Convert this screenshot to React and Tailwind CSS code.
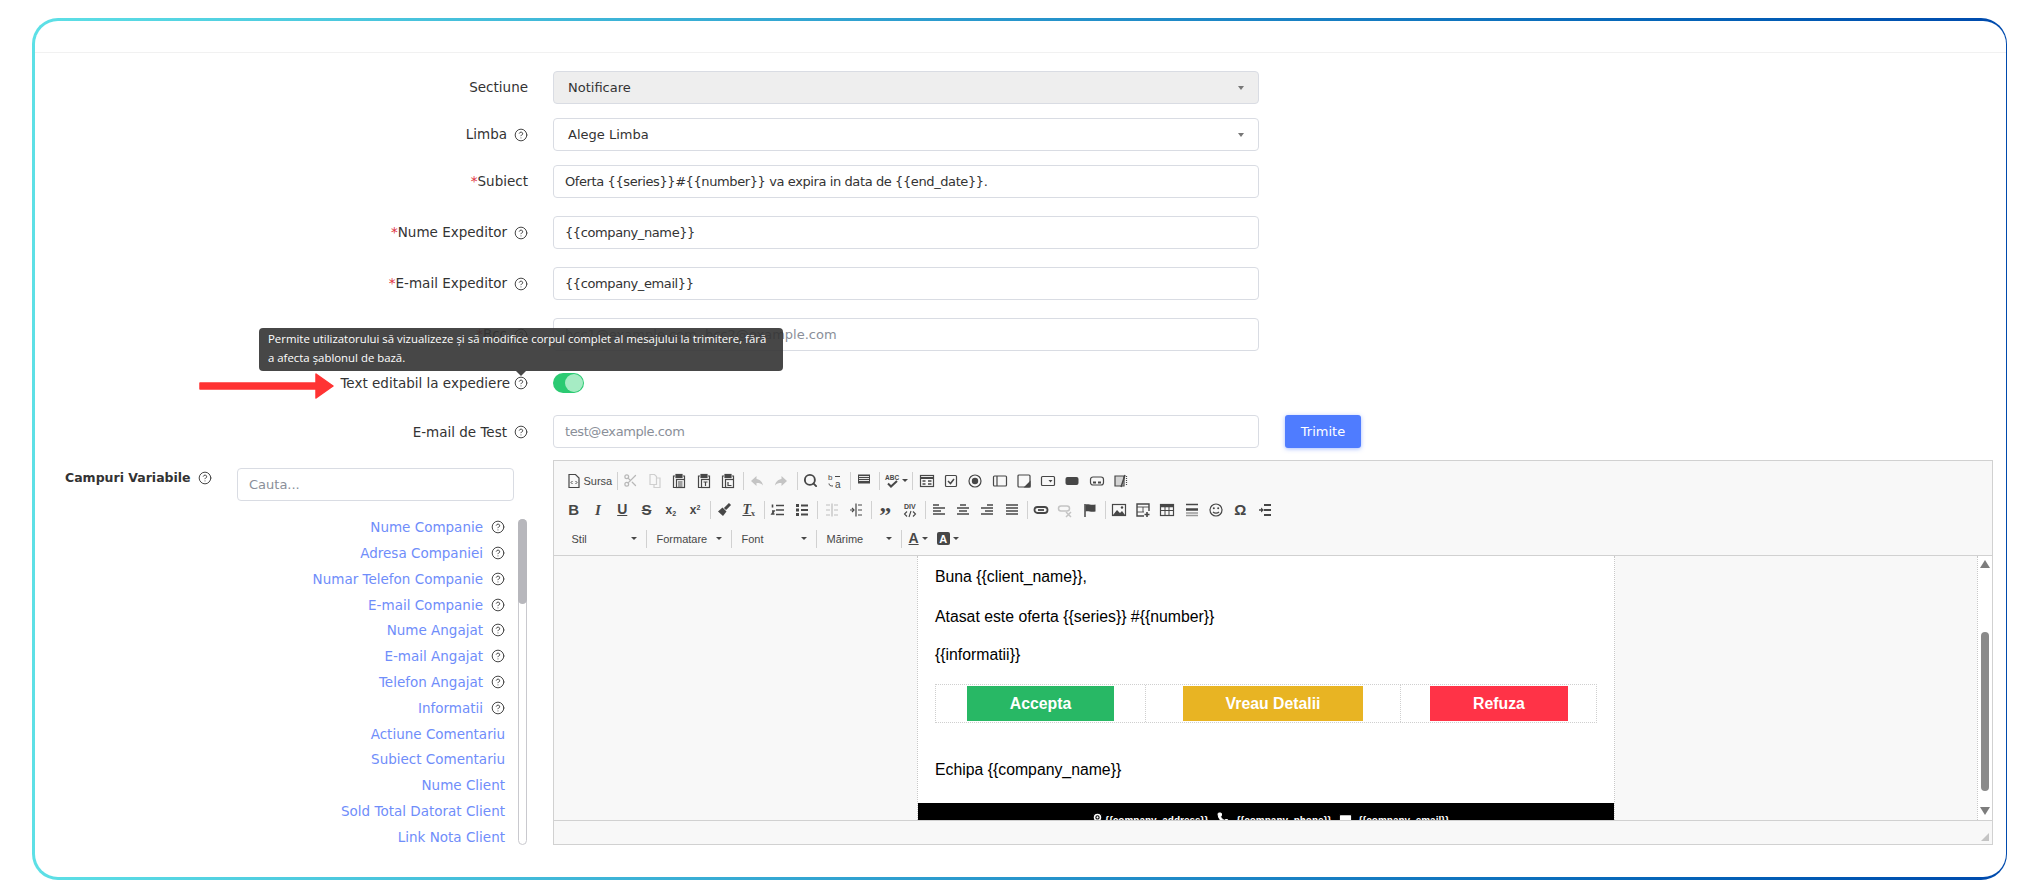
import { CircleHelp, Scissors, Search, MapPin, Phone, Mail } from "lucide-react";

const Svg = ({ children, className = "text-[#474747]" }) => (
  <svg viewBox="0 0 16 16" width="16" height="16" fill="none" stroke="currentColor" strokeWidth="1.2" className={className}>
    {children}
  </svg>
);

const Help = () => <CircleHelp size={14} strokeWidth={1.7} className="shrink-0 text-[#444]" />;

const Paste = ({ mark }) => (
  <Svg>
    <path d="M4 3H2.5v11.5H5" />
    <path d="M12 3h1.5v3" />
    <rect x="5" y="1.5" width="6" height="3" fill="currentColor" />
    <rect x="5.5" y="6.5" width="8" height="8" />
    {mark}
  </Svg>
);

const Lines = ({ d }) => (
  <Svg>
    <path d={d} strokeWidth="1.6" />
  </Svg>
);

const Glyph = ({ children, className = "" }) => (
  <span className={`font-['Liberation_Sans',sans-serif] text-[#474747] ${className}`}>{children}</span>
);

const Btn = ({ children }) => <div className="w-[24.3px] h-full flex items-center justify-center shrink-0">{children}</div>;
const Sep = () => <div className="w-px h-[18px] bg-[#d1d1d1] ml-[3px] mr-px shrink-0" />;
const Caret = () => <div className="w-0 h-0 border-x-[3px] border-x-transparent border-t-[3px] border-t-[#474747] shrink-0" />;

function Combo({ label, width = "w-[84px]" }) {
  return (
    <div className={`${width} h-full flex items-center justify-between pl-[10px] pr-[9px] shrink-0`}>
      <Glyph className="text-[11px]">{label}</Glyph>
      <Caret />
    </div>
  );
}

function Toolbar() {
  return (
    <div className="h-[95px] shrink-0 bg-[#f8f8f8] border-b border-[#d1d1d1] pl-[7.5px] pt-[5px]">
      {/* row 1 */}
      <div className="h-[29px] flex items-center">
        <div className="h-full flex items-center pl-[4px] gap-[2px] w-[52px]">
          <Svg>
            <path d="M3 1.5h6.5l3.5 3.5v9.5H3z" />
            <path d="M6.5 8 5 9.5 6.500 11M9.500 8 11 9.500 9.500 11" strokeWidth="1" />
          </Svg>
          <Glyph className="text-[11px]">Sursa</Glyph>
        </div>
        <Sep />
        <Btn><Scissors size={15} className="text-[#b8b8b8]" /></Btn>
        <Btn>
          <Svg className="text-[#cfcfcf]"><path d="M3 1.500h4.500l2 2v8H3zM9.500 5H13v9.500H7V11.500" /></Svg>
        </Btn>
        <Btn><Paste mark={<path d="M7 9h4.500M7 11h4.500M7 13h4.500" strokeWidth="1" />} /></Btn>
        <Btn><Paste mark={<path d="M7.500 9h4M9.500 9v4" strokeWidth="1.200" />} /></Btn>
        <Btn><Paste mark={<path d="M8 9v3.500h3.500" strokeWidth="1.200" />} /></Btn>
        <Sep />
        <Btn><Svg className="text-[#c4c4c4]"><path d="M7.500 3 2 8l5.500 5V10c3 0 5 .5 6.500 2.500-.5-3.500-3-6-6.500-6.500z" fill="currentColor" stroke="none" /></Svg></Btn>
        <Btn><Svg className="text-[#c4c4c4]"><path d="M8.500 3 14 8l-5.500 5V10c-3 0-5 .5-6.500 2.500.5-3.500 3-6 6.500-6.500z" fill="currentColor" stroke="none" /></Svg></Btn>
        <Sep />
        <Btn><Search size={15} strokeWidth={3} className="text-[#474747]" /></Btn>
        <Btn>
          <Svg>
            <text x="1" y="7" fontSize="8" fill="currentColor" stroke="none" fontFamily="Liberation Sans">b</text>
            <text x="8" y="15" fontSize="10" fill="currentColor" stroke="none" fontFamily="Liberation Sans">a</text>
            <path d="M8 3.500h5M2 10.500c0 2 1.500 2.500 4 2.500" strokeWidth="1" />
          </Svg>
        </Btn>
        <Sep />
        <Btn>
          <Svg>
            <rect x="2" y="1.500" width="12" height="9" fill="currentColor" stroke="none" />
            <path d="M3 3.500h10M3 5.500h10M3 7.500h10M3 12h10M6.500 14.500h3" stroke="#f8f8f8" strokeWidth="0.9" />
          </Svg>
        </Btn>
        <Sep />
        <div className="w-[26px] h-full flex items-center justify-center gap-[2px] shrink-0 ml-[2px]">
          <Svg>
            <text x="1" y="7" fontSize="6.500" fontWeight="700" fill="currentColor" stroke="none" fontFamily="Liberation Sans">ABC</text>
            <path d="M4 10.500 7 13.500 13 8" strokeWidth="2" />
          </Svg>
          <Caret />
        </div>
        <Sep />
        <Btn>
          <Svg>
            <rect x="1.500" y="2.500" width="13" height="11" />
            <path d="M2 5h12" strokeWidth="2" />
            <path d="M3.500 8h3M3.500 11h3M9 8h3.500M9 11h3.500" strokeWidth="1.500" />
          </Svg>
        </Btn>
        <Btn><Svg><rect x="2.500" y="2.500" width="11" height="11" rx="1" /><path d="M5 8l2.500 2.500L11 6" strokeWidth="1.500" /></Svg></Btn>
        <Btn><Svg><circle cx="8" cy="8" r="6" /><circle cx="8" cy="8" r="3.200" fill="currentColor" stroke="none" /></Svg></Btn>
        <Btn><Svg><rect x="1.500" y="3" width="13" height="10" rx="1" /><path d="M5 3v10" /></Svg></Btn>
        <Btn><Svg><rect x="2" y="2" width="12" height="12" rx="1" /><path d="M14 9l-5 5h5z" fill="currentColor" /></Svg></Btn>
        <Btn><Svg><rect x="1.500" y="3.500" width="13" height="9" rx="1" /><path d="M8.500 7h4L10.500 9.500z" fill="currentColor" stroke="none" /></Svg></Btn>
        <Btn><Svg><rect x="1.500" y="4" width="13" height="8" rx="2" fill="currentColor" stroke="none" /></Svg></Btn>
        <Btn><Svg><rect x="1.500" y="4" width="13" height="8" rx="2.500" /><path d="M4 9.500h3M9 9.500h3" strokeWidth="2" /></Svg></Btn>
        <Btn><Svg><path d="M2 3h9v10H2z" fill="currentColor" fillOpacity="0.2" /><path d="M12 2 8 14" strokeWidth="1.500" /><path d="M13.500 3v10" strokeDasharray="1 1" /></Svg></Btn>
      </div>
      {/* row 2 */}
      <div className="h-[29px] flex items-center">
        <Btn><Glyph className="text-[15px] font-bold">B</Glyph></Btn>
        <Btn><Glyph className="text-[15px] font-bold italic font-['Liberation_Serif',serif]">I</Glyph></Btn>
        <Btn><Glyph className="text-[14px] font-bold underline">U</Glyph></Btn>
        <Btn><Glyph className="text-[15px] font-bold line-through">S</Glyph></Btn>
        <Btn><Glyph className="text-[12px] font-bold">x<sub className="text-[7px]">2</sub></Glyph></Btn>
        <Btn><Glyph className="text-[12px] font-bold">x<sup className="text-[7px]">2</sup></Glyph></Btn>
        <Sep />
        <Btn>
          <Svg>
            <path d="M9 7 14 2" strokeWidth="3" />
            <path d="M6.500 5.500 10.500 9.500 7 14 2 9.500z" fill="currentColor" stroke="none" />
          </Svg>
        </Btn>
        <Btn><Glyph className="text-[14px] font-bold italic font-['Liberation_Serif',serif] underline">T<sub className="text-[8px] not-italic">x</sub></Glyph></Btn>
        <Sep />
        <Btn><Lines d="M6 3.500h8M6 8h8M6 12.500h8M2.500 2.500v3M2 9h2L2 12h2.500" /></Btn>
        <Btn><Svg><path d="M7 3.500h7M7 8h7M7 12.500h7" strokeWidth="1.800" /><path d="M2 3.500h3M2 8h3M2 12.500h3" strokeWidth="2.800" /></Svg></Btn>
        <Sep />
        <Btn><Svg className="text-[#bdbdbd]"><path d="M2 3h4M2 8h4M2 13h4M10 3h4M10 8h4M10 13h4M8 1.500v13M5 8H2" /></Svg></Btn>
        <Btn><Svg><path d="M2 8h4M10 3h4M10 8h4M10 13h4M8 1.500v13" /><path d="M4 6l2 2-2 2" /></Svg></Btn>
        <Sep />
        <Btn><Glyph className="text-[24px] font-bold font-['Liberation_Serif',serif] leading-none h-[12px] mt-[-2px]">”</Glyph></Btn>
        <Btn>
          <Svg>
            <text x="2" y="7" fontSize="7" fontWeight="700" fill="currentColor" stroke="none" fontFamily="Liberation Sans">DIV</text>
            <path d="M5 9.500 2.500 12 5 14.500M11 9.500l2.500 2.500L11 14.500M9 9l-2 6" strokeWidth="1.100" />
          </Svg>
        </Btn>
        <Sep />
        <Btn><Lines d="M2 3h6M2 6h12M2 9h8M2 12h12" /></Btn>
        <Btn><Lines d="M5 3h6M2 6h12M4 9h8M2 12h12" /></Btn>
        <Btn><Lines d="M8 3h6M2 6h12M6 9h8M2 12h12" /></Btn>
        <Btn><Lines d="M2 3h12M2 6h12M2 9h12M2 12h12" /></Btn>
        <Sep />
        <Btn><Svg><rect x="1.500" y="5" width="13" height="6" rx="3" strokeWidth="1.800" /><path d="M5 8h6" strokeWidth="1.800" /></Svg></Btn>
        <Btn><Svg className="text-[#c4c4c4]"><rect x="1.500" y="4" width="11" height="5" rx="2.500" strokeWidth="1.500" /><path d="M9 10l5 5M14 10l-5 5" strokeWidth="1.500" /></Svg></Btn>
        <Btn><Svg><path d="M3 2v13" strokeWidth="1.500" /><path d="M3.500 2.500c3-1 5 1 10 0v7c-5 1-7-1-10 0z" fill="currentColor" stroke="none" /></Svg></Btn>
        <Sep />
        <Btn><Svg><rect x="1.500" y="2.500" width="13" height="11" /><path d="M2 13l4-5 3 3 2-2 3 4z" fill="currentColor" stroke="none" /><circle cx="11" cy="5.500" r="1.200" fill="currentColor" stroke="none" /></Svg></Btn>
        <Btn><Svg><path d="M9 14H2V2h12v7" strokeWidth="1.400" /><path d="M2 5h12M8 5v5M2 10h7" strokeWidth="0.900" /><path d="M12 10v5M9.500 12.500h5" strokeWidth="1.600" /></Svg></Btn>
        <Btn><Svg><rect x="1.500" y="2.500" width="13" height="11" /><path d="M2 4h12" strokeWidth="2.500" /><path d="M2 8.500h12M6 5v9M10 5v9" strokeWidth="1" /></Svg></Btn>
        <Btn><Svg><path d="M2 2.500h12" strokeWidth="1.500" /><path d="M2 7.500h12" strokeWidth="2.500" /><path d="M2 11h12M2 13.500h12" className="text-[#999]" strokeWidth="1.300" /></Svg></Btn>
        <Btn><Svg><circle cx="8" cy="8" r="6" /><path d="M5 10c1.500 1.500 4.500 1.500 6 0" /><circle cx="5.800" cy="6.200" r="1" fill="currentColor" stroke="none" /><circle cx="10.200" cy="6.200" r="1" fill="currentColor" stroke="none" /></Svg></Btn>
        <Btn><Glyph className="text-[15px] font-bold">Ω</Glyph></Btn>
        <Btn><Svg><path d="M7 3h7M7 13h7M7 8h7" strokeWidth="2" /><path d="M2 8h2" strokeWidth="1.500" /><path d="M4 5.500 7 8l-3 2.500z" fill="currentColor" stroke="none" /></Svg></Btn>
      </div>
      {/* row 3 */}
      <div className="h-[29px] flex items-center">
        <Combo label="Stil" />
        <div className="w-px h-[18px] bg-[#d1d1d1] shrink-0" />
        <Combo label="Formatare" />
        <div className="w-px h-[18px] bg-[#d1d1d1] shrink-0" />
        <Combo label="Font" />
        <div className="w-px h-[18px] bg-[#d1d1d1] shrink-0" />
        <Combo label="Mărime" />
        <div className="w-px h-[18px] bg-[#d1d1d1] shrink-0" />
        <div className="h-full flex items-center pl-[7px] gap-[3px] shrink-0">
          <Glyph className="text-[14px] font-bold underline">A</Glyph>
          <Caret />
        </div>
        <div className="h-full flex items-center pl-[9px] gap-[3px] shrink-0">
          <Glyph className="w-[13px] h-[13px] bg-[#474747] !text-white text-[11px] font-bold flex items-center justify-center rounded-[2px]">A</Glyph>
          <Caret />
        </div>
      </div>
    </div>
  );
}

function EmailBody() {
  return (
    <div className="flex-1 min-w-0 overflow-hidden bg-[#f8f8f8]">
      <div className="ml-[363px] w-[698px] h-[400px] bg-white border-x border-dotted border-[#c8c8c8] font-['Liberation_Sans',sans-serif] text-[15.8px] leading-[20px] text-black">
        <div className="pl-[17px] pt-[11px]">
          <p className="mb-[20px]">Buna {"{{client_name}}"},</p>
          <p className="mb-[18px]">Atasat este oferta {"{{series}}"} #{"{{number}}"}</p>
          <p className="mb-[19px]">{"{{informatii}}"}</p>
          <div className="w-[662px] h-[39px] flex border border-dotted border-[#cfcfcf] font-bold text-white">
            <div className="w-[210px] h-full border-r border-dotted border-[#cfcfcf] pl-[31px] pt-px">
              <div className="w-[147px] h-[35px] bg-[#28b865] flex items-center justify-center">Accepta</div>
            </div>
            <div className="w-[255px] h-full border-r border-dotted border-[#cfcfcf] pl-[37px] pt-px">
              <div className="w-[180px] h-[35px] bg-[#e8b423] flex items-center justify-center">Vreau Detalii</div>
            </div>
            <div className="flex-1 h-full pl-[29px] pt-px">
              <div className="w-[138px] h-[35px] bg-[#ff3347] flex items-center justify-center">Refuza</div>
            </div>
          </div>
          <p className="mt-[37px] mb-[23px]">Echipa {"{{company_name}}"}</p>
        </div>
        <div className="h-[60px] bg-black text-white text-[10px] font-bold flex items-start pl-[173px] pt-[9px] leading-[18px]">
          <MapPin size={13} fill="white" stroke="black" className="shrink-0 mr-[1px]" />
          <span className="mr-[9px]">{"{{company_address}}"}</span>
          <Phone size={12} fill="white" className="shrink-0 mr-[7px]" />
          <span className="mr-[7px]">{"{{company_phone}}"}</span>
          <Mail size={15} fill="white" stroke="black" className="shrink-0 mr-[5px]" />
          <span>{"{{company_email}}"}</span>
        </div>
      </div>
    </div>
  );
}

function Editor() {
  return (
    <div className="w-[1440px] h-[385px] flex flex-col border border-[#d1d1d1]">
      <Toolbar />
      <div className="flex-1 min-h-0 flex">
        <EmailBody />
        <div className="w-[15px] shrink-0 bg-white border-l border-dotted border-[#c8c8c8] flex flex-col items-center pt-[4px]">
          <div className="w-0 h-0 border-x-[5px] border-x-transparent border-b-[8px] border-b-[#7d7d7d]" />
          <div className="w-[8px] h-[159px] mt-[64px] rounded-full bg-[#8a8a8a]" />
          <div className="w-0 h-0 mt-[16px] border-x-[5px] border-x-transparent border-t-[8px] border-t-[#7d7d7d]" />
        </div>
      </div>
      <div className="h-[24px] shrink-0 bg-[#f8f8f8] border-t border-[#d1d1d1] flex justify-end items-end pr-[3px] pb-[3px]">
        <div className="w-0 h-0 border-l-[8px] border-l-transparent border-b-[8px] border-b-[#c4c4c4]" />
      </div>
    </div>
  );
}

const inputCls =
  "w-[706px] h-[33px] px-[11px] rounded-[4px] border border-[#d9dce3] bg-white text-[13px] tracking-[-0.4px] text-[#333] outline-none placeholder:text-[#8a8f99]";

function Row({ label, star, help = true, gap = "ml-[7px]", mb, children }) {
  return (
    <div className={`flex items-center ${mb}`}>
      <div className="w-[493px] flex items-center justify-end text-[13.5px] text-[#333] shrink-0">
        {star && <span className="text-[#e0343f]">*</span>}
        <span>{label}</span>
        {help && <span className={gap}><Help /></span>}
      </div>
      <div className="ml-[25px] flex items-center">{children}</div>
    </div>
  );
}

function Select({ label, className }) {
  return (
    <div className={`w-[706px] h-[33px] pl-[14px] pr-[14px] rounded-[4px] border border-[#d9dce3] flex items-center justify-between text-[13px] text-[#333] ${className}`}>
      <span>{label}</span>
      <div className="w-0 h-0 border-x-[3px] border-x-transparent border-t-[4px] border-t-[#777]" />
    </div>
  );
}

const fields = [
  ["Nume Companie", true],
  ["Adresa Companiei", true],
  ["Numar Telefon Companie", true],
  ["E-mail Companie", true],
  ["Nume Angajat", true],
  ["E-mail Angajat", true],
  ["Telefon Angajat", true],
  ["Informatii", true],
  ["Actiune Comentariu", false],
  ["Subiect Comentariu", false],
  ["Nume Client", false],
  ["Sold Total Datorat Client", false],
  ["Link Nota Client", false],
];

export default function App() {
  return (
    <div className="relative w-[2025px] h-[894px] overflow-hidden bg-white pl-[32px] pt-[18px] font-['DejaVu_Sans',sans-serif]">
      <div className="w-[1975px] h-[862px] rounded-[26px] bg-linear-to-r from-[#5de0e6] to-[#004aad] pl-[3px] pr-[1.5px] py-[3px]">
        <div className="w-full h-full rounded-[23px] bg-white overflow-hidden">
          <div className="h-[32px] border-b border-[#f1f1f1]" />

          <div className="pt-[18px]">
            <Row label="Sectiune" help={false} mb="mb-[14px]">
              <Select label="Notificare" className="bg-[#eeeeee]" />
            </Row>
            <Row label="Limba" mb="mb-[14px]">
              <Select label="Alege Limba" className="bg-white" />
            </Row>
            <Row label="Subiect" star help={false} mb="mb-[18px]">
              <input readOnly className={inputCls} defaultValue="Oferta {{series}}#{{number}} va expira in data de {{end_date}}." />
            </Row>
            <Row label="Nume Expeditor" star mb="mb-[18px]">
              <input readOnly className={inputCls} defaultValue="{{company_name}}" />
            </Row>
            <Row label="E-mail Expeditor" star mb="mb-[18px]">
              <input readOnly className={inputCls} defaultValue="{{company_email}}" />
            </Row>
            <Row label="Bcc" star mb="mb-[22px]">
              <input readOnly className={`${inputCls} placeholder:tracking-normal`} placeholder="bcc1@example.com, bcc2@example.com" />
            </Row>
            <Row label="Text editabil la expediere" gap="ml-[4px]" mb="mb-[22px]">
              <div className="w-[31px] h-[20px] rounded-full bg-[#2bca72] flex items-center justify-end pr-[1px]">
                <div className="w-[18px] h-[18px] rounded-full bg-[#a6ecc4]" />
              </div>
            </Row>
            <Row label="E-mail de Test" mb="mb-[12px]">
              <input readOnly className={inputCls} placeholder="test@example.com" />
              <button className="ml-[26px] w-[76px] h-[33px] rounded-[3px] bg-[#4f7cff] text-white text-[13px] shadow-[0_1px_4px_rgba(79,124,255,0.5)]">
                Trimite
              </button>
            </Row>
          </div>

          <div className="flex">
            {/* campuri variabile */}
            <div className="w-[518px] shrink-0">
              <div className="flex pt-[8px]">
                <div className="w-[202px] pl-[30px] pt-[2px] flex items-start gap-[7px] shrink-0">
                  <span className="text-[12.5px] font-bold text-[#333] leading-[16px]">Campuri Variabile</span>
                  <span className="pt-[1px]"><Help /></span>
                </div>
                <input readOnly placeholder="Cauta..." className="w-[277px] h-[33px] px-[11px] rounded-[4px] border border-[#d9dce3] text-[13px] outline-none placeholder:text-[#8a8f99]" />
              </div>
              <div className="flex justify-end pr-[26px] mt-[18px] h-[326px]">
                <div className="flex flex-col gap-[9.8px] items-end pr-[13px] overflow-hidden">
                  {fields.map(([name, help]) => (
                    <div key={name} className="h-[16px] flex items-center gap-[8px] text-[13.5px] leading-[16px] text-[#6f8dfa] whitespace-nowrap">
                      <span>{name}</span>
                      {help && <Help />}
                    </div>
                  ))}
                </div>
                <div className="w-[9px] h-full rounded-full border border-[#c9c9ce] shrink-0">
                  <div className="w-[9px] h-[85px] rounded-full bg-[#b7b7bc] -ml-px -mt-px" />
                </div>
              </div>
            </div>
            <Editor />
          </div>
        </div>
      </div>

      {/* arrow pointing at the toggle label */}
      <svg className="absolute left-[198px] top-[370px]" width="140" height="32" viewBox="0 0 140 32">
        <path d="M2 13h116V4l17 12-17 12v-9H2z" fill="#ff3333" stroke="#ff3333" strokeWidth="1.500" strokeLinejoin="round" />
      </svg>

      {/* tooltip */}
      <div className="absolute left-[259px] top-[328px] w-[524px] h-[43px] rounded-[4px] bg-[#333333]/90 pl-[9px] pr-[12px] pt-[1px] font-['Open_Sans',sans-serif] text-[11.4px] font-medium leading-[19px] text-white">
        Permite utilizatorului să vizualizeze și să modifice corpul complet al mesajului la trimitere, fără a afecta șablonul de bază.
        <div className="absolute left-[257px] top-[43px] w-0 h-0 border-x-[5px] border-x-transparent border-t-[5px] border-t-[#333333]/90" />
      </div>
    </div>
  );
}
